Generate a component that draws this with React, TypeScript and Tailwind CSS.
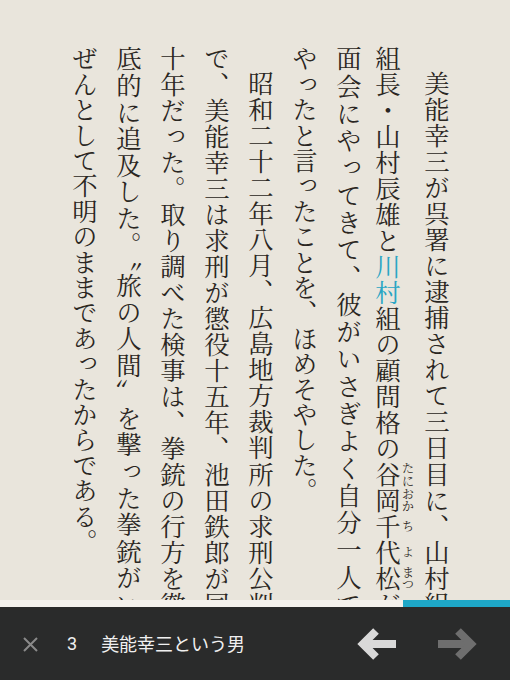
export default function App() {
  // 縦書き本文の1行 = 1カラム（行末まで埋まる行は両端揃え）
  const col = 'block w-[44px]';
  const full = 'block w-[44px] [text-align-last:justify]';

  return (
    <main className="h-[680px] w-[510px] bg-[#e9e5dc] flex flex-col overflow-hidden">
      {/* 本文（縦書き） */}
      <div className="h-[600px] overflow-hidden flex justify-end pt-[46px] pr-[51px]">
        <div className="[writing-mode:vertical-rl] h-[571px] text-[25.4px] leading-[44px] text-[#2a2622] text-justify font-['Noto_Serif_CJK_JP','Noto_Sans_CJK_JP',serif]">
          <p>
            <span className={`${full} indent-[1em]`}>美能幸三が呉署に逮捕されて三日目に、山村組</span>
            <span className={full}>
              組長・山村辰雄と<span className="text-[#2aa5c4]">川村</span>組の顧問格の
              <ruby>
                谷岡<rt className="text-[12.5px]">たにおか</rt>
              </ruby>
              <ruby>
                千<rt className="text-[12.5px]">ち</rt>
              </ruby>
              <ruby>
                代<rt className="text-[12.5px]">よ</rt>
              </ruby>
              <ruby>
                松<rt className="text-[12.5px]">まつ</rt>
              </ruby>
              が
            </span>
            <span className={full}>面会にやってきて、彼がいさぎよく自分一人で</span>
            <span className={col}>やったと言ったことを、ほめそやした。</span>
          </p>
          <p>
            <span className={`${full} indent-[1em]`}>昭和二十二年八月、広島地方裁判所の求刑公判</span>
            <span className={full}>で、美能幸三は求刑が懲役十五年、池田鉄郎が同</span>
            <span className={full}>十年だった。取り調べた検事は、拳銃の行方を徹</span>
            <span className={full}>底的に追及した。〝旅の人間〟を撃った拳銃がい</span>
            <span className={col}>ぜんとして不明のままであったからである。</span>
          </p>
        </div>
      </div>

      {/* 進捗バー */}
      <div className="flex h-[7px]">
        <div className="flex-1 bg-[#f4f2ed]"></div>
        <div className="w-[107px] bg-[#1ea8c8]"></div>
      </div>

      {/* フッター */}
      <footer className="flex-1 bg-[#2a2b2b] flex items-center pl-[23px] pr-[33px] font-['Noto_Sans_CJK_JP',sans-serif]">
        <button className="w-[15px] h-[15px] mt-[1px]">
          <svg viewBox="0 0 15 15" width="15" height="15">
            <path d="M1 1L14 14M14 1L1 14" stroke="#8a8a8a" strokeWidth="2" fill="none" />
          </svg>
        </button>
        <span className="ml-[29px] text-[18px] text-[#f0f0f0] font-['Roboto',sans-serif]">3</span>
        <span className="ml-[24px] text-[18px] text-[#f0f0f0]">美能幸三という男</span>
        <div className="ml-auto flex items-center gap-[42px]">
          <svg viewBox="0 0 39 32" width="39" height="32">
            <path d="M8 16H39" stroke="#d9d9d9" strokeWidth="8" fill="none" />
            <path d="M19 3L6 16L19 29" stroke="#d9d9d9" strokeWidth="8" fill="none" />
          </svg>
          <svg viewBox="0 0 39 32" width="39" height="32">
            <path d="M0 16H31" stroke="#6e6e6e" strokeWidth="8" fill="none" />
            <path d="M20 3L33 16L20 29" stroke="#6e6e6e" strokeWidth="8" fill="none" />
          </svg>
        </div>
      </footer>
    </main>
  );
}
